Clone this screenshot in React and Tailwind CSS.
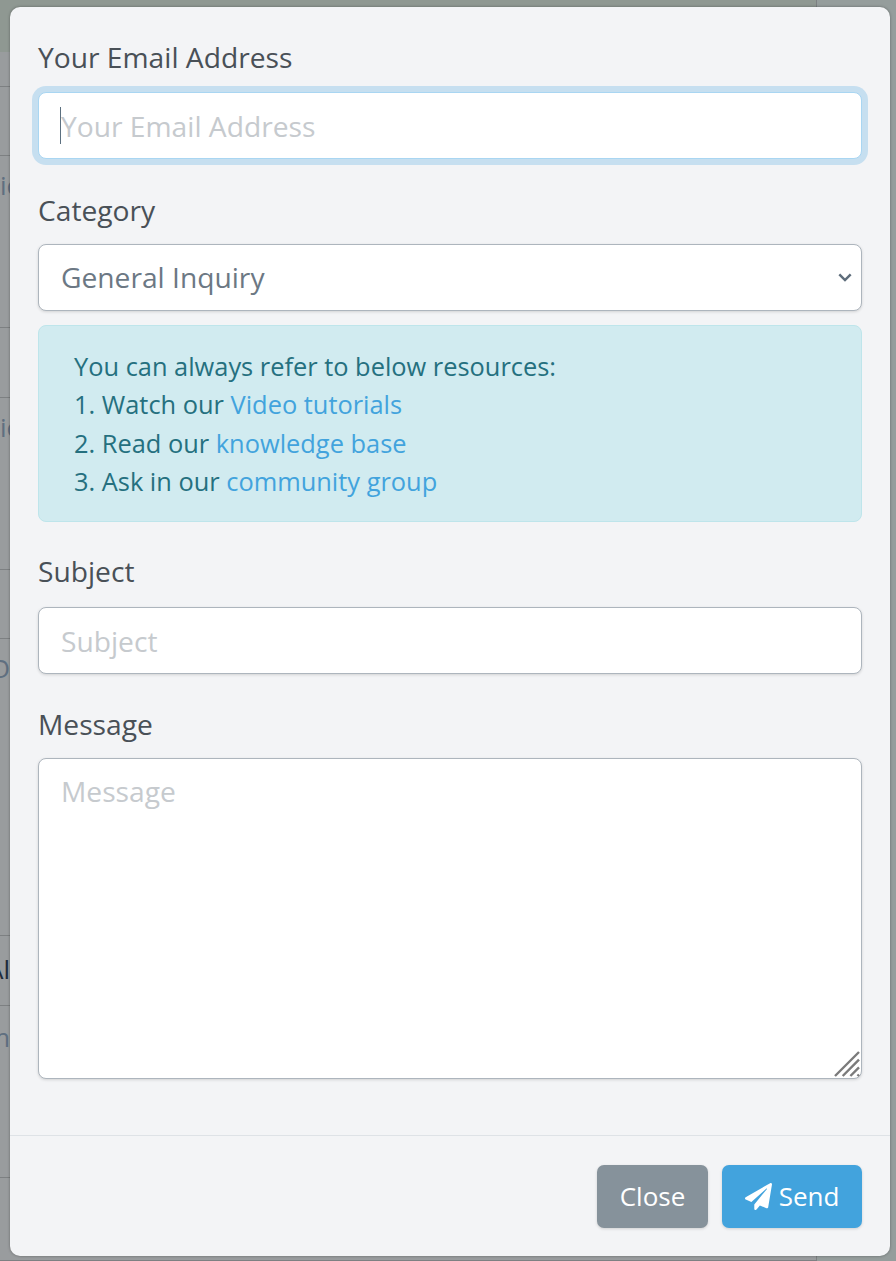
const rows = [
  { h: 'h-[35px]' },
  { h: 'h-[69px]' },
  { h: 'h-[172px]', text: 'ic', cls: 'text-[#5f6f80]', pad: 'pt-[10px]' },
  { h: 'h-[70px]' },
  { h: 'h-[172px]', text: 'ic', cls: 'text-[#5f6f80]', pad: 'pt-[10px]' },
  { h: 'h-[69px]' },
  { h: 'h-[297px]', text: 'O', cls: 'text-[#5f6f80]', pad: 'pt-[10px]', end: true },
  { h: 'h-[70px]', text: 'Al', cls: 'text-[#1e2b3a]', pad: 'pt-[14px]', end: true },
  { h: 'h-[172px]', text: 'm', cls: 'text-[#5f6f80]', pad: 'pt-[12px]', end: true },
  { h: 'h-[83px]' },
];

const labelCls = 'block text-[28.2px] leading-[39px] text-[#495057]';
const fieldCls =
  'block w-full h-[67px] rounded-[8px] border bg-white px-[22px] text-[28.2px] text-[#6c7884] outline-none placeholder:text-[#c6cace]';
const restCls = 'border-[#adb5bd] shadow-[0_1px_3px_rgba(0,0,0,0.14)]';

const Backdrop = () => (
  <div className="flex h-[1261px] w-[896px] overflow-hidden bg-[#999c9e] font-['Open_Sans',sans-serif] text-[26px]">
    <div className="w-[817px] border-r border-[#7d8082]">
      <div className="h-[52px] bg-[#8f9892]" />
      {rows.map((row, i) => (
        <div
          key={i}
          className={`${row.h} ${row.pad || ''} overflow-hidden border-b border-[#7d8082] leading-[39px] ${row.cls || ''}`}
        >
          {row.text && (
            <div className={`flex w-[10px] whitespace-nowrap ${row.end ? 'justify-end' : ''}`}>{row.text}</div>
          )}
        </div>
      ))}
    </div>
    <div className="flex-1 bg-[#959d9c]" />
  </div>
);

const App = () => {
  return (
    <div className="relative h-[1261px] w-[896px] overflow-hidden font-['Open_Sans',sans-serif]">
      <Backdrop />

      <div className="absolute left-[10px] top-[7px] flex h-[1249px] w-[880px] flex-col rounded-[10px] bg-[#f3f4f6] shadow-[0_0_3px_rgba(0,0,0,0.35)]">
        <form className="flex-1 px-[28px] pt-[31px]">
          <label className={labelCls}>Your Email Address</label>
          <div className="relative mt-[15px]">
            <input
              type="email"
              readOnly
              placeholder="Your Email Address"
              className={`${fieldCls} border-[#a9d6f2] shadow-[0_0_0_6px_#c6dff0]`}
            />
            <span className="absolute left-[22px] top-[15px] h-[37px] w-px bg-[#5c7080]" />
          </div>

          <label className={`${labelCls} mt-[32px]`}>Category</label>
          <div className="relative mt-[14px]">
            <select className={`${fieldCls} ${restCls} appearance-none`} defaultValue="General Inquiry">
              <option>General Inquiry</option>
            </select>
            <svg
              viewBox="0 0 16 10"
              className="pointer-events-none absolute right-[10px] top-[29px] h-[9px] w-[14px]"
              fill="none"
              stroke="#5e6d7b"
              strokeWidth="2.8"
            >
              <path d="M1.5 1.5 8 8l6.5-6.5" />
            </svg>
          </div>

          <div className="mt-[14px] h-[197px] rounded-[8px] border border-[#bee5eb] bg-[#d1ebf0] px-[35px] pt-[21px] text-[25.4px] leading-[38.4px] text-[#25707f]">
            <div>You can always refer to below resources:</div>
            <div>
              1. Watch our <a className="text-[#42a3dd]">Video tutorials</a>
            </div>
            <div>
              2. Read our <a className="text-[#42a3dd]">knowledge base</a>
            </div>
            <div>
              3. Ask in our <a className="text-[#42a3dd]">community group</a>
            </div>
          </div>

          <label className={`${labelCls} mt-[30px]`}>Subject</label>
          <input type="text" readOnly placeholder="Subject" className={`${fieldCls} ${restCls} mt-[16px]`} />

          <label className={`${labelCls} mt-[31px]`}>Message</label>
          <div className="relative mt-[14px]">
            <textarea
              readOnly
              placeholder="Message"
              className={`${fieldCls} ${restCls} h-[321px] resize-none pt-[13px] leading-[39px]`}
            />
            <svg
              viewBox="0 0 26 26"
              className="pointer-events-none absolute bottom-[2px] right-[2px] h-[26px] w-[26px]"
              stroke="#7b7b7b"
              strokeWidth="2.4"
            >
              <path d="M1 25 25 1M8.7 25 25 8.7M16.4 25 25 16.4M23.5 25 25 23.5" />
            </svg>
          </div>
        </form>

        <div className="flex h-[121px] items-start justify-end gap-[14px] border-t border-[#dee2e6] px-[28px] pt-[29px]">
          <button
            type="button"
            className="h-[63px] w-[111px] rounded-[7px] bg-[#86929b] text-[26px] text-white shadow-[0_1px_3px_rgba(0,0,0,0.15)]"
          >
            Close
          </button>
          <button
            type="button"
            className="flex h-[63px] w-[140px] items-center justify-center gap-[7px] rounded-[7px] bg-[#42a3dd] text-[26px] text-white shadow-[0_1px_3px_rgba(0,0,0,0.15)]"
          >
            <svg viewBox="0 0 512 512" className="h-[27px] w-[27px]" fill="currentColor">
              <path d="M476 3.2 12.5 270.6c-18.1 10.4-15.8 35.6 2.2 43.2L121 358.4l287.3-253.2c5.5-4.9 13.3 2.6 8.6 8.3L176 407v80.5c0 23.6 28.5 32.9 42.5 15.8L282 426l124.6 52.2c14.2 6 30.4-2.9 33-18.2l72-432C515 7.8 493.3-6.8 476 3.2z" />
            </svg>
            Send
          </button>
        </div>
      </div>
    </div>
  );
};

export default App;
